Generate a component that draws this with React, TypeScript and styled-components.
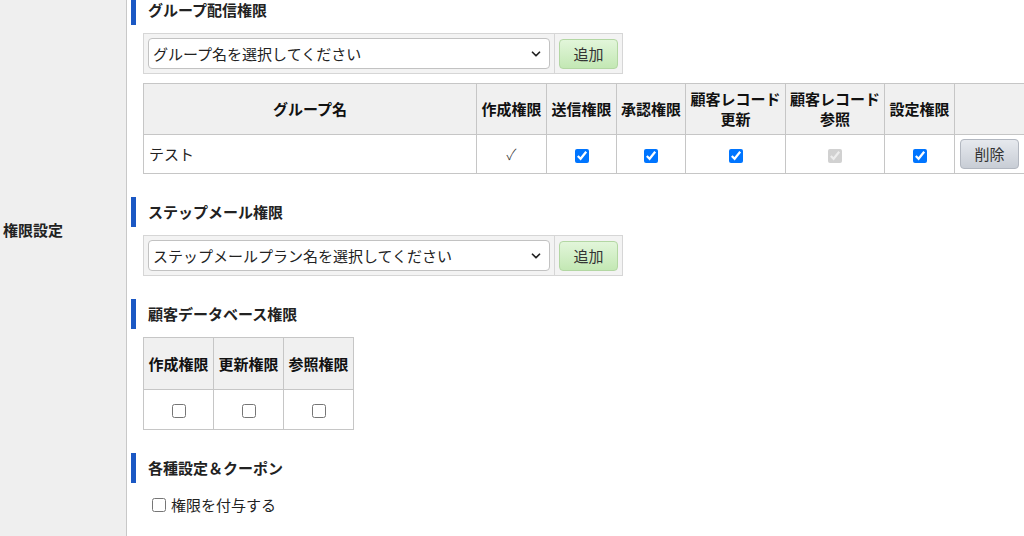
import styled, { createGlobalStyle } from "styled-components";
import { ChevronDown } from "lucide-react";

const GlobalStyle = createGlobalStyle`
  html, body {
    margin: 0;
    padding: 0;
    background: #fff;
    overflow: hidden;
  }
  body {
    font-family: "Noto Sans CJK JP", "Noto Sans", sans-serif;
    font-size: 15px;
    color: #222;
  }
`;

const Row = styled.div`
  display: flex;
  width: 1024px;
  margin-top: -86px;
`;

const LabelCell = styled.div`
  flex: 0 0 127px;
  box-sizing: border-box;
  background: #efefef;
  border-right: 1px solid #c8c8c8;
  display: flex;
  align-items: center;
  padding-left: 3px;
  font-weight: bold;
  line-height: 20px;
`;

const ContentCell = styled.div`
  flex: 1;
  min-width: 0;
  padding: 81px 0 30px 4px;
`;

const Section = styled.section`
  margin-bottom: 23px;

  &:last-child {
    margin-bottom: 0;
  }
`;

const Heading = styled.h3`
  margin: 0;
  height: 30px;
  line-height: 30px;
  border-left: 5px solid #1b58c4;
  padding-left: 12px;
  font-size: 15px;
  font-weight: bold;
  color: #222;
`;

const SectionBody = styled.div<{ $top?: number }>`
  margin: ${(p) => p.$top ?? 8}px 0 0 12px;
`;

const PickerBox = styled.div`
  display: inline-flex;
  border: 1px solid #d6d6d6;
  background: #f3f3f3;
`;

const PickerCell = styled.div`
  padding: 4px;
  display: flex;
  align-items: center;

  & + & {
    border-left: 1px solid #d6d6d6;
  }
`;

const SelectWrap = styled.div`
  position: relative;
  width: 402px;
  height: 31px;

  svg {
    position: absolute;
    right: 7px;
    top: 9px;
    pointer-events: none;
  }
`;

const Select = styled.select`
  appearance: none;
  width: 100%;
  height: 100%;
  box-sizing: border-box;
  border: 1px solid #c2c2c2;
  border-radius: 4px;
  background: #fff;
  padding: 0 24px 0 4px;
  font-family: inherit;
  font-size: 15px;
  color: #222;
  line-height: 29px;
`;

const Button = styled.button<{ $tone: "green" | "gray" }>`
  width: 59px;
  height: 30px;
  box-sizing: border-box;
  border-radius: 4px;
  font-family: inherit;
  font-size: 15px;
  line-height: 28px;
  padding: 0;
  color: #333;
  border: 1px solid ${(p) => (p.$tone === "green" ? "#b3d7a3" : "#b2b7c0")};
  background: ${(p) =>
    p.$tone === "green"
      ? "linear-gradient(#e2f6da, #c3e8b4)"
      : "linear-gradient(#e6e9ee, #c8cdd5)"};
`;

const Table = styled.table<{ $width: number; $top?: number }>`
  border-collapse: collapse;
  table-layout: fixed;
  width: ${(p) => p.$width}px;
  margin-top: ${(p) => p.$top ?? 0}px;
`;

const Col = styled.col<{ $w?: number }>`
  width: ${(p) => (p.$w ? `${p.$w}px` : "auto")};
`;

const Tr = styled.tr<{ $h: number }>`
  height: ${(p) => p.$h}px;
`;

const Th = styled.th`
  border: 1px solid #c6c6c6;
  background: #f0f0f0;
  padding: 0 2px;
  font-size: 15px;
  font-weight: bold;
  line-height: 20px;
  white-space: nowrap;
  text-align: center;
  vertical-align: middle;
  color: #111;
`;

const Td = styled.td<{ $left?: boolean }>`
  border: 1px solid #c6c6c6;
  padding: 0 5px;
  font-size: 15px;
  line-height: 20px;
  text-align: ${(p) => (p.$left ? "left" : "center")};
  vertical-align: middle;
`;

const Check = styled.input.attrs({ type: "checkbox" })`
  margin: 0;
  width: 14px;
  height: 14px;
  vertical-align: middle;
`;

const CheckMark = styled.span`
  font-family: "Noto Sans CJK JP", sans-serif;
  font-size: 15px;
  font-weight: 300;
  color: #333;
`;

const OptionLabel = styled.label`
  display: flex;
  align-items: center;
  gap: 5px;
  padding-left: 9px;
  line-height: 20px;
  font-size: 15px;
`;

function Picker({ placeholder }: { placeholder: string }) {
  return (
    <PickerBox>
      <PickerCell>
        <SelectWrap>
          <Select defaultValue="">
            <option value="">{placeholder}</option>
          </Select>
          <ChevronDown size={14} strokeWidth={3} color="#222" />
        </SelectWrap>
      </PickerCell>
      <PickerCell>
        <Button $tone="green">追加</Button>
      </PickerCell>
    </PickerBox>
  );
}

export default function App() {
  return (
    <>
      <GlobalStyle />
      <Row>
        <LabelCell>権限設定</LabelCell>
        <ContentCell>
          <Section>
            <Heading>グループ配信権限</Heading>
            <SectionBody>
              <Picker placeholder="グループ名を選択してください" />
              <Table $width={882} $top={9}>
                <colgroup>
                  <Col />
                  <Col $w={70} />
                  <Col $w={70} />
                  <Col $w={69} />
                  <Col $w={100} />
                  <Col $w={99} />
                  <Col $w={70} />
                  <Col $w={70} />
                </colgroup>
                <thead>
                  <Tr $h={51}>
                    <Th>グループ名</Th>
                    <Th>作成権限</Th>
                    <Th>送信権限</Th>
                    <Th>承認権限</Th>
                    <Th>
                      顧客レコード
                      <br />
                      更新
                    </Th>
                    <Th>
                      顧客レコード
                      <br />
                      参照
                    </Th>
                    <Th>設定権限</Th>
                    <Th />
                  </Tr>
                </thead>
                <tbody>
                  <Tr $h={39}>
                    <Td $left>テスト</Td>
                    <Td>
                      <CheckMark>✓</CheckMark>
                    </Td>
                    <Td>
                      <Check defaultChecked />
                    </Td>
                    <Td>
                      <Check defaultChecked />
                    </Td>
                    <Td>
                      <Check defaultChecked />
                    </Td>
                    <Td>
                      <Check defaultChecked disabled />
                    </Td>
                    <Td>
                      <Check defaultChecked />
                    </Td>
                    <Td>
                      <Button $tone="gray">削除</Button>
                    </Td>
                  </Tr>
                </tbody>
              </Table>
            </SectionBody>
          </Section>

          <Section>
            <Heading>ステップメール権限</Heading>
            <SectionBody>
              <Picker placeholder="ステップメールプラン名を選択してください" />
            </SectionBody>
          </Section>

          <Section>
            <Heading>顧客データベース権限</Heading>
            <SectionBody>
              <Table $width={210}>
                <colgroup>
                  <Col $w={70} />
                  <Col $w={70} />
                  <Col $w={70} />
                </colgroup>
                <thead>
                  <Tr $h={52}>
                    <Th>作成権限</Th>
                    <Th>更新権限</Th>
                    <Th>参照権限</Th>
                  </Tr>
                </thead>
                <tbody>
                  <Tr $h={40}>
                    <Td>
                      <Check />
                    </Td>
                    <Td>
                      <Check />
                    </Td>
                    <Td>
                      <Check />
                    </Td>
                  </Tr>
                </tbody>
              </Table>
            </SectionBody>
          </Section>

          <Section>
            <Heading>各種設定＆クーポン</Heading>
            <SectionBody $top={12}>
              <OptionLabel>
                <Check />
                権限を付与する
              </OptionLabel>
            </SectionBody>
          </Section>
        </ContentCell>
      </Row>
    </>
  );
}
